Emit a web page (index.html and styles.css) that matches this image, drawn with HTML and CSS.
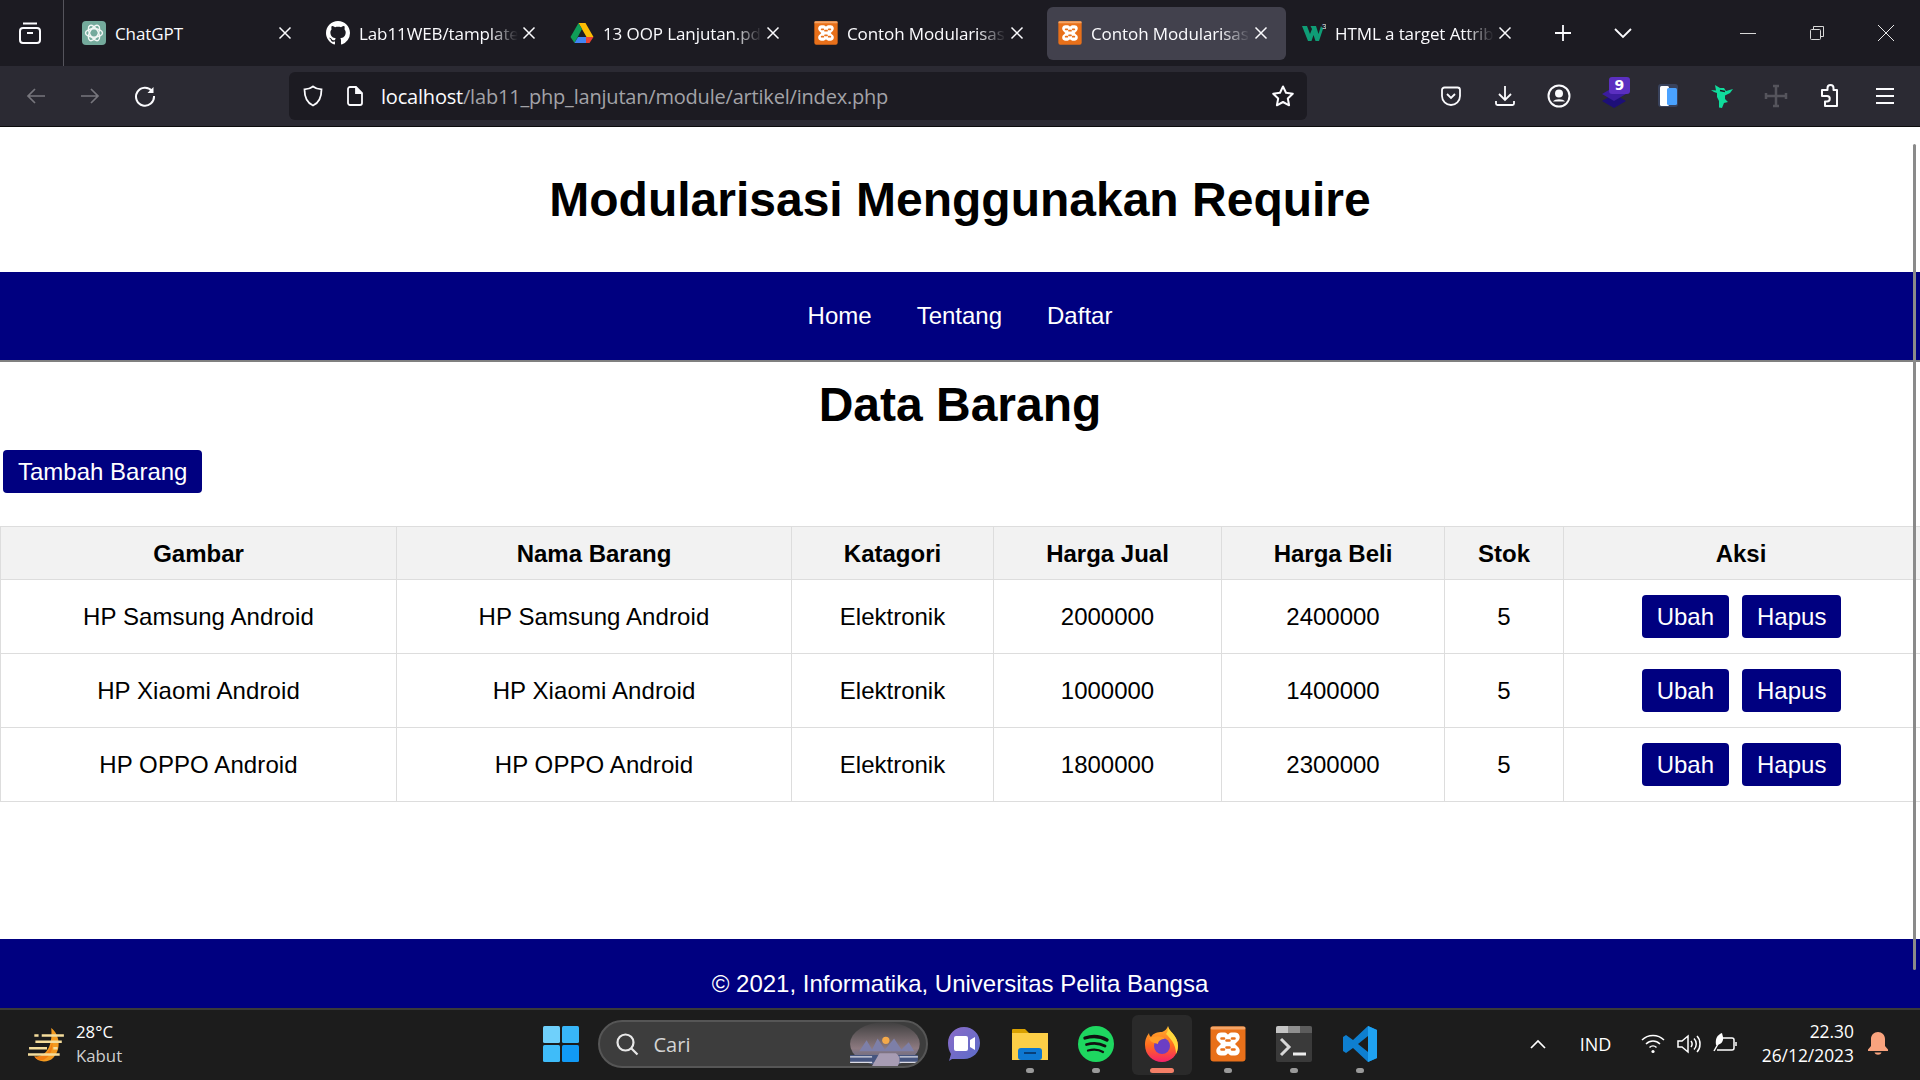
FILE: index.html
```html
<!DOCTYPE html>
<html lang="id">
<head>
<meta charset="utf-8">
<title>Contoh Modularisasi</title>
<link rel="stylesheet" href="styles.css">
</head>
<body>
<svg class="defs" width="0" height="0" aria-hidden="true">
  <symbol id="xampp" viewBox="0 0 36 36">
    <rect x="0.5" y="0.5" width="35" height="35" rx="3" fill="#e8701a"/>
    <rect x="0.5" y="0.5" width="35" height="3" rx="1.500" fill="#f5a465"/>
    <path d="M11 6.500h3.500c2 0 3 2 3.500 2s1.500-2 3.500-2H25c4.500 0 6 5 3.500 8-1 1.200-2.500 2.200-3.500 3.500 1 1.300 2.500 2.300 3.500 3.500 2.500 3 1 8-3.500 8h-3.500c-2 0-3-2-3.500-2s-1.500 2-3.500 2H11c-4.500 0-6-5-3.500-8 1-1.200 2.500-2.200 3.500-3.500-1-1.300-2.500-2.300-3.500-3.500C5 11.500 6.500 6.500 11 6.500z" fill="#fff"/>
    <path d="M11.500 12.500h2.500M22 12.500h2.500M11.500 23.500h2.500M22 23.500h2.500M16.500 14.500h3M16.500 21.500h3" stroke="#e8701a" stroke-width="2.600" stroke-linecap="round"/>
  </symbol>
  <symbol id="x" viewBox="0 0 16 16">
    <path d="M2.500 2.500l11 11M13.500 2.500l-11 11" stroke="#fbfbfe" stroke-width="1.500" fill="none"/>
  </symbol>
</svg>
<div class="screen">
  <div class="tabbar">
    <div class="tab-side">
      <svg class="ic24" viewBox="0 0 24 24" fill="none" stroke="#fbfbfe" stroke-width="2"><rect x="2" y="7" width="20" height="15" rx="3"/><path d="M5 2.500h14M9 12h6"/></svg>
    </div>
    <div class="tabs">
      <div class="tab">
        <svg class="fav" viewBox="0 0 24 24"><rect width="24" height="24" rx="4" fill="#74aa9c"/><g fill="none" stroke="#f2f7f5" stroke-width="1.400"><ellipse cx="12" cy="12" rx="8.500" ry="4.200"/><ellipse cx="12" cy="12" rx="8.500" ry="4.200" transform="rotate(60 12 12)"/><ellipse cx="12" cy="12" rx="8.500" ry="4.200" transform="rotate(120 12 12)"/></g></svg>
        <span class="tab-title plain">ChatGPT</span>
        <svg class="tab-x"><use href="#x"/></svg>
      </div>
      <div class="tab">
        <svg class="fav" viewBox="0 0 16 16"><path fill="#fff" d="M8 0C3.580 0 0 3.580 0 8c0 3.540 2.290 6.530 5.470 7.590.400.070.550-.170.550-.380 0-.190-.010-.820-.010-1.490-2.010.370-2.530-.490-2.690-.940-.090-.230-.480-.940-.820-1.130-.280-.150-.680-.520-.010-.530.630-.010 1.080.580 1.230.820.720 1.210 1.870.870 2.330.660.070-.520.280-.870.510-1.070-1.780-.200-3.640-.890-3.640-3.950 0-.870.310-1.590.820-2.150-.080-.200-.360-1.020.080-2.120 0 0 .670-.210 2.200.820.640-.180 1.320-.270 2-.270.680 0 1.360.090 2 .270 1.530-1.040 2.200-.820 2.200-.820.440 1.100.160 1.920.080 2.120.510.560.820 1.270.820 2.150 0 3.070-1.870 3.750-3.650 3.950.290.250.540.730.540 1.480 0 1.070-.010 1.930-.010 2.200 0 .210.150.460.550.380A8.013 8.013 0 0016 8c0-4.420-3.580-8-8-8z"/></svg>
        <span class="tab-title">Lab11WEB/tamplate</span>
        <svg class="tab-x"><use href="#x"/></svg>
      </div>
      <div class="tab">
        <svg class="fav" viewBox="0 0 24 24"><polygon points="8.500,2 15.500,2 23.500,16 16.500,16" fill="#fbbc04"/><polygon points="8.500,2 12,8 4.500,22 0.500,16" fill="#0f9d58"/><polygon points="4.500,22 8,16 16,16 16,22" fill="#4285f4"/><polygon points="16,16 23.500,16 19.500,22 16,22" fill="#ea4335"/></svg>
        <span class="tab-title">13 OOP Lanjutan.pdf</span>
        <svg class="tab-x"><use href="#x"/></svg>
      </div>
      <div class="tab">
        <svg class="fav"><use href="#xampp"/></svg>
        <span class="tab-title">Contoh Modularisasi</span>
        <svg class="tab-x"><use href="#x"/></svg>
      </div>
      <div class="tab active">
        <svg class="fav"><use href="#xampp"/></svg>
        <span class="tab-title">Contoh Modularisasi</span>
        <svg class="tab-x"><use href="#x"/></svg>
      </div>
      <div class="tab">
        <svg class="fav" viewBox="0 0 24 24"><polygon points="0,5 5,5 8,13 10,8 8.500,5 14,5 16.500,13 19,5 21,8 17,20 13.500,20 11.500,14 9.500,20 6,20" fill="#0f9d76"/><text x="20" y="8" class="w3-sup">3</text></svg>
        <span class="tab-title">HTML a target Attribute</span>
        <svg class="tab-x"><use href="#x"/></svg>
      </div>
    </div>
    <div class="tab-actions">
      <svg class="ic20" viewBox="0 0 20 20" stroke="#fbfbfe" stroke-width="1.800" fill="none"><path d="M10 2v16M2 10h16"/></svg>
      <svg class="ic20" viewBox="0 0 20 20" stroke="#fbfbfe" stroke-width="1.800" fill="none"><path d="M2 6l8 8 8-8"/></svg>
    </div>
    <div class="win-ctrl">
      <svg class="ic16" viewBox="0 0 16 16" stroke="#d8d8d8" fill="none"><path d="M0 8.500h16"/></svg>
      <svg class="ic16" viewBox="0 0 16 16" stroke="#d8d8d8" fill="none"><rect x="1.500" y="4.500" width="10" height="10" rx="1"/><path d="M4.500 4V1.500h10v10H12"/></svg>
      <svg class="ic16" viewBox="0 0 16 16" stroke="#e8e8e8" fill="none"><path d="M0 0l16 16M16 0L0 16"/></svg>
    </div>
  </div>

  <div class="toolbar">
    <div class="nav-btns">
      <svg class="ic20" viewBox="0 0 20 20" stroke="#77767d" stroke-width="1.700" fill="none"><path d="M19 10H2M9 3l-7 7 7 7"/></svg>
      <svg class="ic20" viewBox="0 0 20 20" stroke="#77767d" stroke-width="1.700" fill="none"><path d="M1 10h17M11 3l7 7-7 7"/></svg>
      <svg class="ic22" viewBox="0 0 22 22" fill="none" stroke="#fbfbfe" stroke-width="2"><path d="M18 6A9 9 0 1 0 20 11"/><path d="M19.500 2v6h-6z" fill="#fbfbfe" stroke="none"/></svg>
    </div>
    <div class="urlbar">
      <svg class="ic22" viewBox="0 0 22 22" fill="none" stroke="#fbfbfe" stroke-width="1.800"><path d="M11 1.500c2.500 2 5 2.700 8.500 2.800C19.500 13 17 18 11 20.500 5 18 2.500 13 2.500 4.300 6 4.200 8.500 3.500 11 1.500z"/></svg>
      <svg class="ic20 url-file" viewBox="0 0 20 20" fill="none" stroke="#fbfbfe" stroke-width="1.800"><path d="M3 3a2 2 0 0 1 2-2h6l6 6v10a2 2 0 0 1-2 2H5a2 2 0 0 1-2-2z"/><path d="M11 1v6h6" fill="#fbfbfe"/></svg>
      <span class="url-text"><span class="url-host">localhost</span>/lab11_php_lanjutan/module/artikel/index.php</span>
      <svg class="ic24 url-star" viewBox="0 0 24 24" fill="none" stroke="#fbfbfe" stroke-width="2" stroke-linejoin="round"><path d="M12 2.500l3 6.300 6.800.9-5 4.800 1.300 6.800-6.100-3.300-6.100 3.300 1.300-6.800-5-4.800 6.800-.9z"/></svg>
    </div>
    <div class="tools">
      <div class="tool"><svg class="ic22" viewBox="0 0 22 22" fill="none" stroke="#fbfbfe" stroke-width="1.800"><path d="M2 5a2.500 2.500 0 0 1 2.500-2.500h13A2.500 2.500 0 0 1 20 5v6a9 9 0 0 1-18 0z"/><path d="M7 9l4 4 4-4"/></svg></div>
      <div class="tool"><svg class="ic22" viewBox="0 0 22 22" fill="none" stroke="#fbfbfe" stroke-width="1.800"><path d="M11 1v14M5 9l6 6 6-6M2 16v2.500a1.500 1.500 0 0 0 1.500 1.500h15a1.500 1.500 0 0 0 1.500-1.500V16"/></svg></div>
      <div class="tool"><svg class="ic24" viewBox="0 0 24 24" fill="none" stroke="#fbfbfe" stroke-width="2"><circle cx="12" cy="12" r="10.500"/><circle cx="12" cy="9.500" r="3" fill="#fbfbfe"/><path d="M6 17.500c2-3 10-3 12 0z" fill="#fbfbfe" stroke="none"/></svg></div>
      <div class="tool">
        <svg class="ic24" viewBox="0 0 24 24"><polygon points="12,10 24,17 12,24 0,17" fill="#1d0f78"/><polygon points="12,3 24,10 12,17 0,10" fill="#3b1c9e"/></svg>
        <span class="badge">9</span>
      </div>
      <div class="tool"><svg class="ic24" viewBox="0 0 24 24"><rect x="2" y="0" width="20" height="23" rx="3" fill="#39425c"/><rect x="4" y="2" width="9" height="20" rx="1.500" fill="#fff"/><rect x="11" y="4" width="10" height="17" rx="1.500" fill="#4aa2ff"/></svg></div>
      <div class="tool"><svg class="ic24" viewBox="0 0 24 24"><path d="M5 1l5 3h4l2 3 7-2-3 4-5 2.500v3.500l3 3-4 1-2 5-3-.5v-6.500l-2-4v-4L4 8 1 6l5 .5z" fill="#10dc9c"/><path d="M10 6.500l5 1" stroke="#1c1b22" stroke-width="1.500"/></svg></div>
      <div class="tool"><svg class="ic24" viewBox="0 0 24 24" fill="none" stroke="#55545c" stroke-width="2.500"><path d="M12 2v20M2 12h20M9 2h6M9 22h6M2 9v6M22 9v6"/></svg></div>
      <div class="tool"><svg class="ic24" viewBox="0 0 24 24" fill="none" stroke="#fbfbfe" stroke-width="2" stroke-linejoin="round"><path d="M9 6h2.500V4a3 3 0 0 1 6 0v2H21v16H9v-4.500h2a2.700 2.700 0 0 0 0-5.500H6V6z" transform="translate(-2 0)"/></svg></div>
      <div class="tool"><svg class="ic20" viewBox="0 0 20 20" stroke="#fbfbfe" stroke-width="2" fill="none"><path d="M1 3h18M1 10h18M1 17h18"/></svg></div>
    </div>
  </div>

  <main class="page">
    <header class="site-head"><h1>Modularisasi Menggunakan Require</h1></header>
    <nav class="site-nav"><a>Home</a><a>Tentang</a><a>Daftar</a></nav>
    <h2 class="sec-title">Data Barang</h2>
    <a class="btn btn-add">Tambah Barang</a>
    <table class="data">
      <colgroup>
        <col class="c1"><col class="c2"><col class="c3"><col class="c4"><col class="c5"><col class="c6"><col class="c7">
      </colgroup>
      <thead>
        <tr><th>Gambar</th><th>Nama Barang</th><th>Katagori</th><th>Harga Jual</th><th>Harga Beli</th><th>Stok</th><th>Aksi</th></tr>
      </thead>
      <tbody>
        <tr><td>HP Samsung Android</td><td>HP Samsung Android</td><td>Elektronik</td><td>2000000</td><td>2400000</td><td>5</td><td><div class="acts"><a class="btn">Ubah</a><a class="btn">Hapus</a></div></td></tr>
        <tr><td>HP Xiaomi Android</td><td>HP Xiaomi Android</td><td>Elektronik</td><td>1000000</td><td>1400000</td><td>5</td><td><div class="acts"><a class="btn">Ubah</a><a class="btn">Hapus</a></div></td></tr>
        <tr><td>HP OPPO Android</td><td>HP OPPO Android</td><td>Elektronik</td><td>1800000</td><td>2300000</td><td>5</td><td><div class="acts"><a class="btn">Ubah</a><a class="btn">Hapus</a></div></td></tr>
      </tbody>
    </table>
    <footer class="site-foot">© 2021, Informatika, Universitas Pelita Bangsa</footer>
    <div class="scrollbar"></div>
  </main>

  <div class="taskbar">
    <div class="tb-left">
      <svg class="weather" viewBox="0 0 36 36"><path d="M22 2c8 6 10 20 2 28-5 5-14 5-18-1 8 1 18-6 16-27z" fill="#f39a1f"/><path d="M6 29c8 1 16-4 17-15 1 8-2 15-8 18-4 1-7 0-9-3z" fill="#f07d12"/><g stroke="#f5dd9c" stroke-width="2.400"><path d="M6 9h4M13 9h21M7 15h25M1 21h17M24 21h4M0 27h30"/></g></svg>
      <div class="weather-text"><span>28°C</span><span class="dim">Kabut</span></div>
    </div>
    <div class="tb-center">
      <div class="slot win">
        <svg class="start" viewBox="0 0 36 36"><rect width="17" height="17" rx="1.500" fill="#6fd0fb"/><rect x="19" width="17" height="17" rx="1.500" fill="#38b6f8"/><rect y="19" width="17" height="17" rx="1.500" fill="#3fbcf9"/><rect x="19" y="19" width="17" height="17" rx="1.500" fill="#119af5"/></svg>
      </div>
      <div class="search">
        <svg class="ic24" viewBox="0 0 24 24" fill="none" stroke="#e8e8e8" stroke-width="2.200"><circle cx="10.500" cy="10.500" r="8"/><path d="M16.500 16.500l6 6"/></svg>
        <span>Cari</span>
        <svg class="search-art" viewBox="0 0 78 48"><defs><linearGradient id="sky" x1="0" y1="0" x2="0" y2="1"><stop offset="0" stop-color="#3f3f3f"/><stop offset=".6" stop-color="#8d7a80"/><stop offset="1" stop-color="#50608a"/></linearGradient></defs><ellipse cx="40" cy="24" rx="38" ry="24" fill="url(#sky)"/><path d="M12 32l8-12 6 10 6-12 8 12 10-12 8 12 8-8 6 10z" fill="#7d7fa8"/><circle cx="41" cy="20" r="4" fill="#f4a94a"/><path d="M2 36h74v8H2z" fill="#46557f"/><path d="M26 48l8-14h18c6 4 4 10 2 14z" fill="#a79cb3"/><path d="M2 38h24M56 38h20M2 44h24M56 44h20" stroke="#dcdce6" stroke-width="1.500"/></svg>
      </div>
      <div class="slot">
        <svg class="app" viewBox="0 0 36 36"><defs><linearGradient id="mt" x1="0" y1="0" x2="1" y2="1"><stop offset="0" stop-color="#8a6bc8"/><stop offset="1" stop-color="#5a6cc8"/></linearGradient></defs><path d="M18 1c9 0 16 7 16 16s-7 16-16 16H6l-3 2 2-7C3 25 2 21 2 17 2 8 9 1 18 1z" fill="url(#mt)"/><rect x="8" y="10" width="14" height="15" rx="2" fill="#fff"/><path d="M24 14l5-3v13l-5-3z" fill="#fff"/></svg>
        <i class="dot none"></i>
      </div>
      <div class="slot">
        <svg class="app" viewBox="0 0 36 36"><path d="M0 4a1 1 0 0 1 1-1h12l4 4h19v6H0z" fill="#d9a100"/><rect y="7" width="36" height="27" fill="#fdcf47"/><rect x="6" y="22" width="24" height="12" rx="3" fill="#0e78d1"/><path d="M12 27h12" stroke="#083f78" stroke-width="2"/></svg>
        <i class="dot"></i>
      </div>
      <div class="slot">
        <svg class="app" viewBox="0 0 36 36"><circle cx="18" cy="18" r="18" fill="#1ed760"/><g fill="none" stroke="#111" stroke-linecap="round"><path d="M7 12c8-2.500 15-2 22 2" stroke-width="3.400"/><path d="M8.500 18.500c7-2 13-1.500 18.500 1.500" stroke-width="2.800"/><path d="M10 24.500c5.500-1.500 11-1 15 1.500" stroke-width="2.300"/></g></svg>
        <i class="dot"></i>
      </div>
      <div class="slot active-app">
        <svg class="app" viewBox="0 0 36 36"><defs><linearGradient id="ff" x1="0" y1="0" x2="0" y2="1"><stop offset="0" stop-color="#ffb52e"/><stop offset=".55" stop-color="#ff6a1f"/><stop offset="1" stop-color="#f5216b"/></linearGradient></defs><path d="M24 0c0 5 10 9 10 20 0 9-7 16-16 16S1 29 1 19c0-6 2-9 4-12 0 2 1 3 2 4 2-4 7-5 11-5 3-1 5-3 6-6z" fill="url(#ff)"/><path d="M24 0c0 5 10 9 10 20 0 3-1 6-2 8 0-10-6-16-10-20 2-2 2-5 2-8z" fill="#ffd83d"/><circle cx="18" cy="20" r="8" fill="#6b3ec4"/><path d="M5 12c5-2 13-3 16 1-4 0-7 2-7 5-4-1-8-2-9-6z" fill="#ff9c2a"/></svg>
        <i class="dot wide"></i>
      </div>
      <div class="slot">
        <svg class="app"><use href="#xampp"/></svg>
        <i class="dot"></i>
      </div>
      <div class="slot">
        <svg class="app" viewBox="0 0 36 36"><rect width="36" height="36" rx="2" fill="#3a3a3a"/><path d="M0 2a2 2 0 0 1 2-2h10v7H0z" fill="#c4c4c4"/><path d="M12 0h12v7H12z" fill="#8f8f8f"/><path d="M24 0h10a2 2 0 0 1 2 2v5H24z" fill="#5c5c5c"/><path d="M5 13l8 8-8 8" fill="none" stroke="#d8d8d8" stroke-width="3"/><path d="M17 28h13" stroke="#eee" stroke-width="3"/></svg>
        <i class="dot"></i>
      </div>
      <div class="slot">
        <svg class="app" viewBox="0 0 36 36"><path d="M26 0L11 14 4 9 1 11v14l3 2 7-5 15 14 9-4V4zm0 10v16L16 18z" fill="#0e7fd0"/><path d="M26 0l9 4v28l-9 4z" fill="#1fa2f2"/></svg>
        <i class="dot"></i>
      </div>
    </div>
    <div class="tb-right">
      <svg class="tray chev" viewBox="0 0 16 16" fill="none" stroke="#fff" stroke-width="1.700"><path d="M1 12l7-7 7 7"/></svg>
      <span class="lang">IND</span>
      <svg class="tray" viewBox="0 0 24 24" fill="none" stroke="#fff" stroke-width="1.500"><path d="M1 8c6-6 16-6 22 0M5 12c4-4 10-4 14 0M8.500 15.500c2-2 5-2 7 0"/><circle cx="12" cy="19.500" r="1.600" fill="#fff" stroke="none"/></svg>
      <svg class="tray" viewBox="0 0 24 24" fill="none" stroke="#fff" stroke-width="1.500"><path d="M1 9h4l6-5v16l-6-5H1z"/><path d="M14 9c1.500 2 1.500 4 0 6M17 6.500c3 3 3 8 0 11M20 4c4 4 4 12 0 16"/></svg>
      <svg class="tray" viewBox="0 0 24 24" fill="none" stroke="#fff" stroke-width="1.500"><path d="M9 6h10a2 2 0 0 1 2 2v8a2 2 0 0 1-2 2H4"/><path d="M23 10v4"/><path d="M9 1C4 3 2 7 3 13c4 0 8-3 7-8z" fill="#fff" stroke="none"/><path d="M1 19l4-7"/></svg>
      <div class="clock"><span>22.30</span><span>26/12/2023</span></div>
      <svg class="bell" viewBox="0 0 20 24"><path d="M10 0c4 0 7 3 7 7v7l3 3.500V19H0v-1.500L3 14V7c0-4 3-7 7-7z" fill="#f9a37e"/><path d="M6.500 20.500h7c-1 3-6 3-7 0z" fill="#f9a37e"/></svg>
    </div>
  </div>
</div>
</body>
</html>
```

FILE: styles.css
```css
* { box-sizing: border-box; }
html, body { margin: 0; padding: 0; height: 100%; overflow: hidden; }
body { font-family: "Liberation Sans", Arial, sans-serif; }
.defs { display: block; height: 0; }

.screen { display: flex; flex-direction: column; height: 1080px; width: 1920px; overflow: hidden; }

.ic16 { width: 16px; height: 16px; flex: none; }
.ic20 { width: 20px; height: 20px; flex: none; }
.ic22 { width: 22px; height: 22px; flex: none; }
.ic24 { width: 24px; height: 24px; flex: none; }

/* tab strip */
.tabbar { height: 66px; flex: none; background: #1c1b22; display: flex; align-items: center; font-family: "Open Sans", sans-serif; color: #fbfbfe; }
.tab-side { width: 64px; height: 66px; flex: none; display: flex; align-items: center; justify-content: center; border-right: 1px solid #55545c; padding-right: 4px; }
.tabs { display: flex; gap: 5px; padding-left: 7px; }
.tab { width: 239px; height: 53px; border-radius: 6px; display: flex; align-items: center; padding: 0 17px 0 11px; gap: 9px; }
.tab.active { background: #42414d; }
.fav { width: 24px; height: 24px; flex: none; }
.w3-sup { font-size: 8px; fill: #e8e8e8; font-family: "Liberation Sans", sans-serif; }
.tab-title { flex: 1; min-width: 0; overflow: hidden; white-space: nowrap; font-size: 17px; letter-spacing: -0.1px; -webkit-mask-image: linear-gradient(to right, #000 82%, transparent 100%); mask-image: linear-gradient(to right, #000 82%, transparent 100%); }
.tab-title.plain { -webkit-mask-image: none; mask-image: none; }
.tab-x { width: 16px; height: 16px; flex: none; margin-left: -6px; }
.tab-actions { display: flex; gap: 40px; padding-left: 23px; }
.win-ctrl { display: flex; margin-left: auto; gap: 53px; padding-right: 26px; }

/* toolbar */
.toolbar { height: 61px; flex: none; background: #2b2a33; border-bottom: 1px solid #0c0c0d; display: flex; align-items: center; }
.nav-btns { width: 289px; flex: none; display: flex; align-items: center; gap: 34px; padding-left: 26px; }
.urlbar { width: 1018px; height: 48px; flex: none; background: #1c1b22; border-radius: 6px; display: flex; align-items: center; padding: 0 12px 0 13px; font-family: "Open Sans", sans-serif; }
.url-file { margin-left: 21px; }
.url-text { margin-left: 16px; color: #a3a3a8; font-size: 20px; letter-spacing: -0.2px; white-space: nowrap; flex: 1; padding-top: 1px; }
.url-host { color: #fbfbfe; }
.url-star { margin-left: auto; }
.tools { display: flex; padding-left: 117px; }
.tool { width: 54.2px; height: 48px; display: flex; align-items: center; justify-content: center; position: relative; }
.badge { position: absolute; top: 5px; right: 11px; width: 21px; height: 17px; background: #5b2fc0; color: #fff; font: bold 14px/17px "DejaVu Sans", sans-serif; text-align: center; border-radius: 3px; }

/* page */
.page { flex: 1; min-height: 0; background: #fff; color: #000; overflow: hidden; position: relative; font-size: 24px; }
.site-head { height: 145px; padding-top: 45px; }
.site-head h1 { margin: 0; font-size: 48px; line-height: 55px; text-align: center; font-weight: bold; }
.site-nav { height: 90px; background: #000080; border-bottom: 2px solid #808080; display: flex; justify-content: center; align-items: center; gap: 45px; color: #fff; }
.sec-title { margin: 15px 0 18px; font-size: 48px; line-height: 55px; text-align: center; font-weight: bold; }
.btn { display: inline-block; background: #000080; color: #fff; padding: 8px 15px; line-height: 27px; border-radius: 4px; white-space: nowrap; }
.btn-add { margin-left: 3px; }

.data { width: 100%; margin-top: 33px; border-collapse: collapse; table-layout: fixed; }
.c1 { width: 396px; } .c2 { width: 395px; } .c3 { width: 202px; } .c4 { width: 228px; }
.c5 { width: 223px; } .c6 { width: 119px; } .c7 { width: 357px; }
.data th, .data td { border: 1px solid #ddd; text-align: center; padding: 0; }
.data th { background: #f2f2f2; height: 53px; font-weight: bold; padding-top: 2px; }
.data td { height: 74px; }
.data td:nth-child(-n+2) { letter-spacing: 0.1px; }
.data th:last-child, .data td:last-child { padding-right: 2px; }
.acts { display: flex; justify-content: center; gap: 13px; padding-left: 1px; }

.site-foot { margin-top: 137px; height: 120px; padding-top: 31px; background: #000080; color: #fff; text-align: center; line-height: 28px; }
.scrollbar { position: absolute; top: 17px; right: 4px; width: 3px; height: 826px; background: #8a8a8a; border-radius: 2px; }

/* taskbar */
.taskbar { height: 72px; flex: none; background: #1c1c1c; border-top: 2px solid #3a3a38; display: grid; grid-template-columns: 1fr auto 1fr; font-family: "Open Sans", sans-serif; color: #fff; }
.tb-left { display: flex; align-items: center; padding-left: 28px; gap: 10px; }
.weather { width: 38px; height: 38px; flex: none; }
.weather-text { display: flex; flex-direction: column; font-size: 16.8px; line-height: 24px; padding-bottom: 3px; }
.dim { color: #cfcfcf; }
.tb-center { display: flex; align-items: flex-start; }
.slot { width: 66px; height: 69px; display: flex; flex-direction: column; align-items: center; padding-top: 16px; gap: 6px; flex: none; }
.win { margin-right: 4px; }
.start { width: 36px; height: 36px; flex: none; }
.app { width: 36px; height: 36px; flex: none; }
.dot { width: 8px; height: 5px; background: #9a9a9a; border-radius: 3px; display: block; }
.dot.none { visibility: hidden; }
.dot.wide { width: 24px; background: #f47f67; }
.active-app { background: #2a2a2a; border-radius: 6px; margin: 5px 3px 0; width: 60px; height: 60px; padding-top: 11px; }
.search { width: 330px; height: 48px; margin: 10px 3px 0 0; background: #3d3d3d; border: 2px solid #565656; border-radius: 24px; display: flex; align-items: center; padding-left: 15px; gap: 15px; font-size: 20px; color: #d4d4d4; overflow: hidden; }
.search-art { margin-left: auto; width: 84px; height: 44px; flex: none; }
.tb-right { display: flex; align-items: center; justify-content: flex-end; padding: 0 32px 2px 0; }
.tray { width: 24px; height: 24px; flex: none; margin-left: 12px; }
.chev { width: 16px; height: 16px; margin: 0; }
.lang { font-size: 18px; margin: 0 17px 0 34px; width: 32px; white-space: nowrap; }
.clock { display: flex; flex-direction: column; align-items: flex-end; font-size: 17.4px; line-height: 24px; margin-left: 25px; padding-bottom: 2px; }
.bell { width: 20px; height: 24px; flex: none; margin-left: 14px; }
```
